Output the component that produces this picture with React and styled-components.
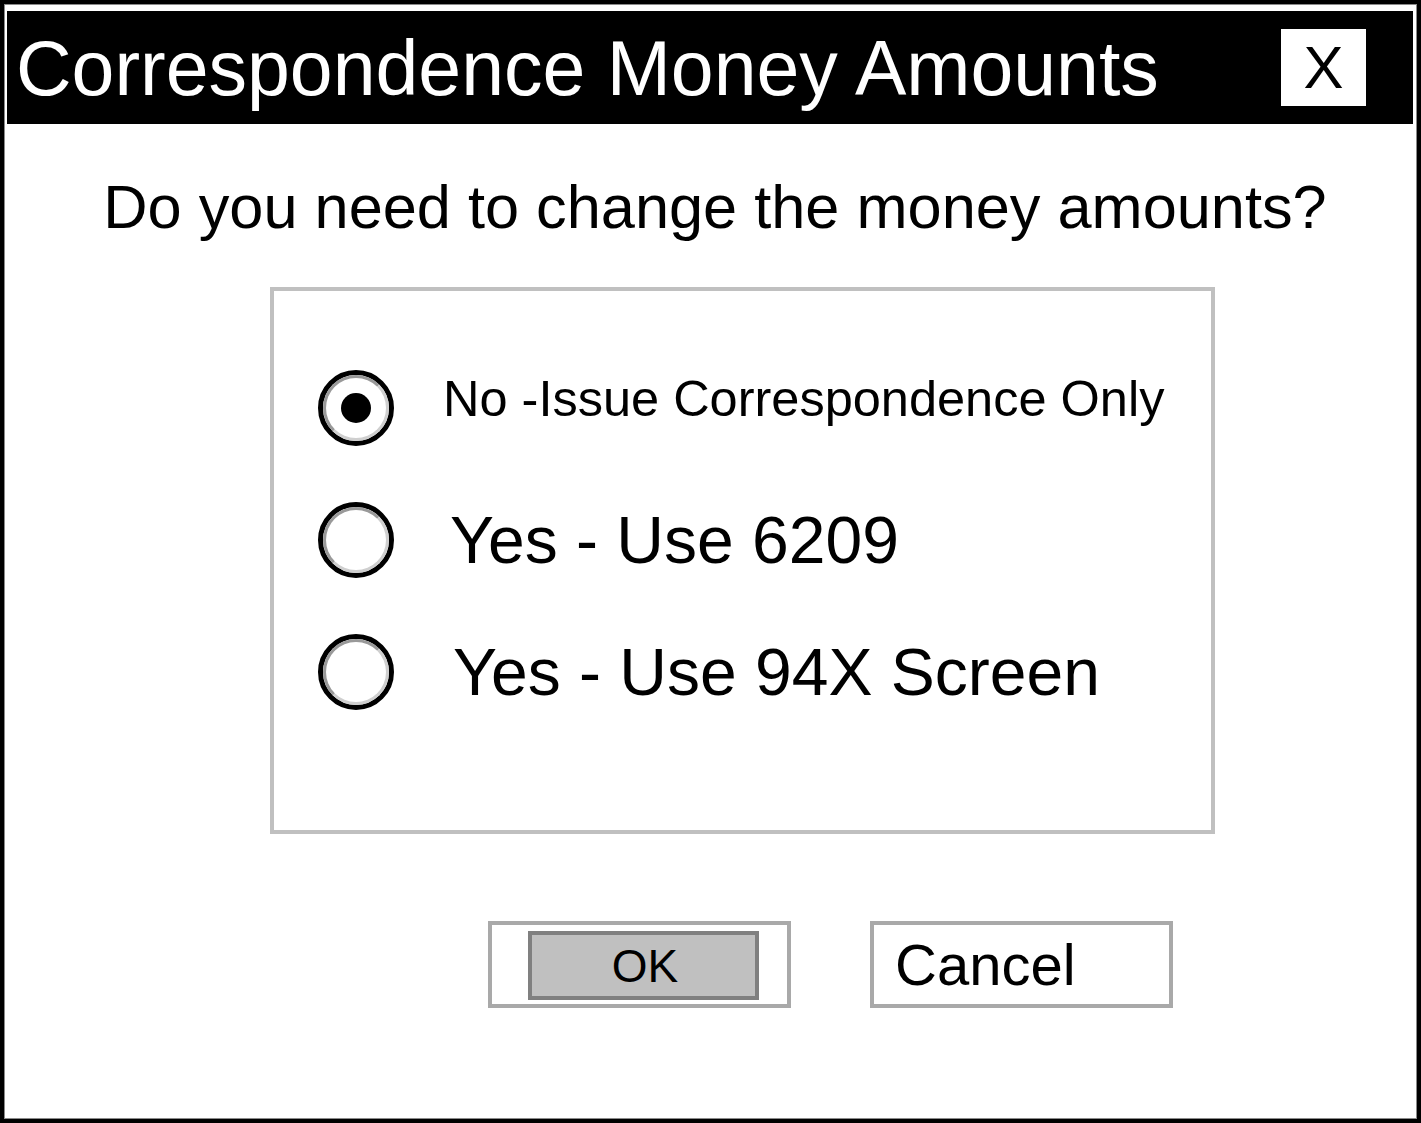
import React, { useState } from 'react'
import styled, { createGlobalStyle } from 'styled-components'

const GlobalStyle = createGlobalStyle`
    html, body {
        margin: 0;
        padding: 0;
        background: #fff;
    }
    body {
        font-family: "Liberation Sans", Arial, sans-serif;
        color: #000;
    }
`

const options = [
    { id: 'no', label: 'No -Issue Correspondence Only', size: 50.5, indent: 49, raise: 19 },
    { id: '6209', label: 'Yes - Use 6209', size: 66, indent: 56, raise: 0 },
    { id: '94x', label: 'Yes - Use 94X Screen', size: 66, indent: 59, raise: 0 },
]

const App = () => {
    const [choice, setChoice] = useState('no')

    return (
        <>
            <GlobalStyle />
            <Window>
                <TitleBar>
                    <Title>Correspondence Money Amounts</Title>
                    <CloseButton type="button">X</CloseButton>
                </TitleBar>

                <Prompt>Do you need to change the money amounts?</Prompt>

                <GroupBox>
                    {options.map((opt) => (
                        <OptionRow key={opt.id} onClick={() => setChoice(opt.id)}>
                            <Radio>
                                <RadioRing>{choice === opt.id && <RadioDot />}</RadioRing>
                            </Radio>
                            <OptionLabel $size={opt.size} $indent={opt.indent} $raise={opt.raise}>
                                {opt.label}
                            </OptionLabel>
                        </OptionRow>
                    ))}
                </GroupBox>

                <ButtonRow>
                    <DefaultFrame>
                        <OkFace type="button">OK</OkFace>
                    </DefaultFrame>
                    <CancelButton type="button">Cancel</CancelButton>
                </ButtonRow>
            </Window>
        </>
    )
}

const Window = styled.div`
    width: 1421px;
    height: 1123px;
    box-sizing: border-box;
    border: 4px solid #000;
    box-shadow: inset 0 0 0 1px #8a8a8a;
    padding: 7px 4px 0 3px;
    display: flex;
    flex-direction: column;
    background: #fff;
`

const TitleBar = styled.div`
    height: 113px;
    flex-shrink: 0;
    background: #000;
    color: #fff;
    display: flex;
    align-items: center;
    justify-content: space-between;
    padding: 0 47px 0 9px;
`

const Title = styled.div`
    font-size: 77px;
    line-height: 1;
    padding-top: 2px;
    white-space: nowrap;
`

const CloseButton = styled.button`
    width: 85px;
    height: 77px;
    border: none;
    padding: 0;
    background: #fff;
    color: #000;
    font-family: "Liberation Sans", Arial, sans-serif;
    font-size: 60px;
    line-height: 1;
    display: flex;
    align-items: center;
    justify-content: center;
`

const Prompt = styled.div`
    margin-top: 53px;
    font-size: 61.3px;
    line-height: 1;
    text-align: center;
    padding-left: 10px;
    white-space: nowrap;
`

const GroupBox = styled.div`
    margin: 49px 0 0 263px;
    width: 945px;
    height: 547px;
    box-sizing: border-box;
    border: 4px solid #c0c0c0;
    padding: 51px 0 0 44px;
    display: flex;
    flex-direction: column;
`

const OptionRow = styled.div`
    height: 132px;
    display: flex;
    align-items: center;
    cursor: pointer;
`

const Radio = styled.div`
    width: 76px;
    height: 76px;
    flex-shrink: 0;
    box-sizing: border-box;
    border: 5px solid #000;
    border-radius: 50%;
    background: #fff;
`

const RadioRing = styled.div`
    width: 100%;
    height: 100%;
    box-sizing: border-box;
    border: 3px solid;
    border-color: #999 #cfcfcf #cfcfcf #999;
    border-radius: 50%;
    display: flex;
    align-items: center;
    justify-content: center;
`

const RadioDot = styled.div`
    width: 30px;
    height: 30px;
    border-radius: 50%;
    background: #000;
`

const OptionLabel = styled.span`
    margin-left: ${(p) => p.$indent}px;
    padding-bottom: ${(p) => p.$raise}px;
    font-size: ${(p) => p.$size}px;
    line-height: 1;
    white-space: nowrap;
`

const ButtonRow = styled.div`
    margin-top: 87px;
    padding-left: 481px;
    display: flex;
    gap: 79px;
`

const DefaultFrame = styled.div`
    width: 303px;
    height: 87px;
    box-sizing: border-box;
    border: 4px solid #a9a9a9;
    padding: 6px 28px 4px 36px;
    display: flex;
`

const OkFace = styled.button`
    flex: 1;
    margin: 0;
    box-sizing: border-box;
    border: 4px solid #808080;
    background: #c0c0c0;
    color: #000;
    font-family: "Liberation Sans", Arial, sans-serif;
    font-size: 46px;
    line-height: 1;
    padding: 0 0 0 3px;
    display: flex;
    align-items: center;
    justify-content: center;
`

const CancelButton = styled.button`
    width: 303px;
    height: 87px;
    margin: 0;
    box-sizing: border-box;
    border: 4px solid #a9a9a9;
    background: #fff;
    color: #000;
    font-family: "Liberation Sans", Arial, sans-serif;
    font-size: 58px;
    line-height: 1;
    padding: 0 0 0 21px;
    display: flex;
    align-items: center;
    justify-content: flex-start;
`

export default App
